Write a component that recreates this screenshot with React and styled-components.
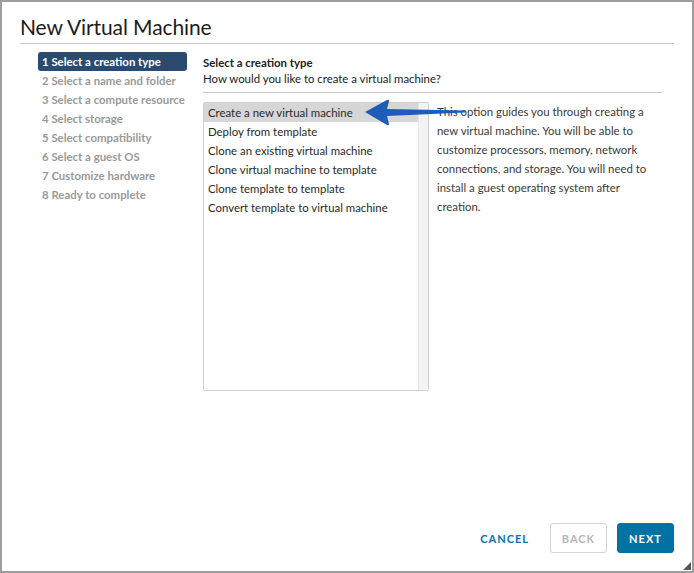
import React, { useState } from 'react';
import styled, { createGlobalStyle } from 'styled-components';

const GlobalStyle = createGlobalStyle`
  html, body {
    margin: 0;
    padding: 0;
    background: #fff;
  }
  body {
    font-family: Lato, "Open Sans", sans-serif;
    color: #313131;
  }
`;

const Dialog = styled.div`
  position: relative;
  box-sizing: border-box;
  display: flex;
  flex-direction: column;
  width: 694px;
  height: 573px;
  border: 2px solid #9d9d9d;
  background: #fff;
  padding: 0 18px 18px 18px;
`;

const Title = styled.h1`
  margin: 0;
  padding: 12px 0 4px;
  font-size: 21px;
  font-weight: 400;
  color: #1c1c1c;
  border-bottom: 1px solid #c8c8c8;
  letter-spacing: -0.1px;
`;

const Body = styled.div`
  flex: 1;
  display: flex;
  padding-top: 8px;
`;

const Nav = styled.ul`
  list-style: none;
  margin: 0;
  padding: 0 0 0 18px;
  width: 149px;
  flex-shrink: 0;
`;

const NavItem = styled.li`
  box-sizing: border-box;
  height: 19px;
  line-height: 19px;
  padding-left: 4px;
  font-size: 11.4px;
  font-weight: 700;
  white-space: nowrap;
  border-radius: 3px;
  color: ${p => (p.$active ? '#fff' : '#9a9a9a')};
  background: ${p => (p.$active ? '#2b4a70' : 'transparent')};
`;

const Content = styled.div`
  flex: 1;
  margin-left: 16px;
  padding-right: 12px;
  display: flex;
  flex-direction: column;
`;

const Heading = styled.div`
  font-size: 11.4px;
  font-weight: 700;
  color: #222;
  line-height: 16px;
  padding-top: 3px;
`;

const Question = styled.div`
  font-size: 11.4px;
  color: #222;
  line-height: 16px;
  padding-bottom: 5px;
  border-bottom: 1px solid #c8c8c8;
`;

const Columns = styled.div`
  position: relative;
  display: flex;
  margin-top: 9px;
`;

const ListBox = styled.div`
  box-sizing: border-box;
  display: flex;
  width: 226px;
  height: 289px;
  border: 1px solid #cfcfcf;
  border-radius: 2px;
`;

const Options = styled.ul`
  list-style: none;
  margin: 0;
  padding: 0;
  flex: 1;
`;

const Option = styled.li`
  height: 19px;
  line-height: 19px;
  padding-left: 4px;
  font-size: 11.4px;
  color: #2a2a2a;
  white-space: nowrap;
  background: ${p => (p.$selected ? '#d6d6d6' : 'transparent')};
  cursor: default;
`;

const Track = styled.div`
  width: 9px;
  background: #f3f3f3;
  border-left: 1px solid #e6e6e6;
`;

const Description = styled.p`
  margin: 0 0 0 8px;
  width: 225px;
  font-size: 11.4px;
  line-height: 19px;
  color: #3a3a3a;
`;

const Arrow = styled.svg`
  position: absolute;
  left: 160px;
  top: -4px;
  pointer-events: none;
`;

const Footer = styled.div`
  display: flex;
  justify-content: flex-end;
  align-items: center;
  gap: 10px;
`;

const Button = styled.button`
  box-sizing: border-box;
  height: 30px;
  width: 57px;
  padding: 0;
  border-radius: 3px;
  font-family: inherit;
  font-size: 11px;
  font-weight: 700;
  letter-spacing: 1px;
  text-transform: uppercase;
  border: 1px solid transparent;
  background: transparent;
  color: #0a72b5;
  cursor: pointer;
  ${p =>
    p.$variant === 'primary' &&
    `background: #0072a3; border-color: #0072a3; color: #fff;`}
  ${p =>
    p.$variant === 'outline' &&
    `border-color: #d4d4d4; color: #b6b6b6; cursor: default;`}
  ${p => p.$variant === 'link' && `width: auto; padding: 0 10px;`}
`;

const Grip = styled.svg`
  position: absolute;
  right: 1px;
  bottom: 1px;
`;

const steps = [
  'Select a creation type',
  'Select a name and folder',
  'Select a compute resource',
  'Select storage',
  'Select compatibility',
  'Select a guest OS',
  'Customize hardware',
  'Ready to complete',
];

const options = [
  'Create a new virtual machine',
  'Deploy from template',
  'Clone an existing virtual machine',
  'Clone virtual machine to template',
  'Clone template to template',
  'Convert template to virtual machine',
];

export default function App() {
  const [selected, setSelected] = useState(0);
  return (
    <>
      <GlobalStyle />
      <Dialog>
        <Title>New Virtual Machine</Title>
        <Body>
          <Nav>
            {steps.map((s, i) => (
              <NavItem key={s} $active={i === 0}>
                {i + 1} {s}
              </NavItem>
            ))}
          </Nav>
          <Content>
            <Heading>Select a creation type</Heading>
            <Question>How would you like to create a virtual machine?</Question>
            <Columns>
              <ListBox>
                <Options>
                  {options.map((o, i) => (
                    <Option key={o} $selected={i === selected} onClick={() => setSelected(i)}>
                      {o}
                    </Option>
                  ))}
                </Options>
                <Track />
              </ListBox>
              <Description>
                This option guides you through creating a new virtual machine. You will be able to
                customize processors, memory, network connections, and storage. You will need to
                install a guest operating system after creation.
              </Description>
              <Arrow width="104" height="30" viewBox="0 0 104 30">
                <path
                  d="M2 14 L24 2 Q26 1 26 3 L24 11 L102 12.5 L102 14.5 L24 18 L26 26 Q26 28 24 27 Z"
                  fill="#1f5cb8"
                />
              </Arrow>
            </Columns>
          </Content>
        </Body>
        <Footer>
          <Button $variant="link">Cancel</Button>
          <Button $variant="outline">Back</Button>
          <Button $variant="primary">Next</Button>
        </Footer>
        <Grip width="8" height="8" viewBox="0 0 8 8">
          <path d="M8 0 L8 8 L0 8 Z" fill="#555" />
        </Grip>
      </Dialog>
    </>
  );
}
